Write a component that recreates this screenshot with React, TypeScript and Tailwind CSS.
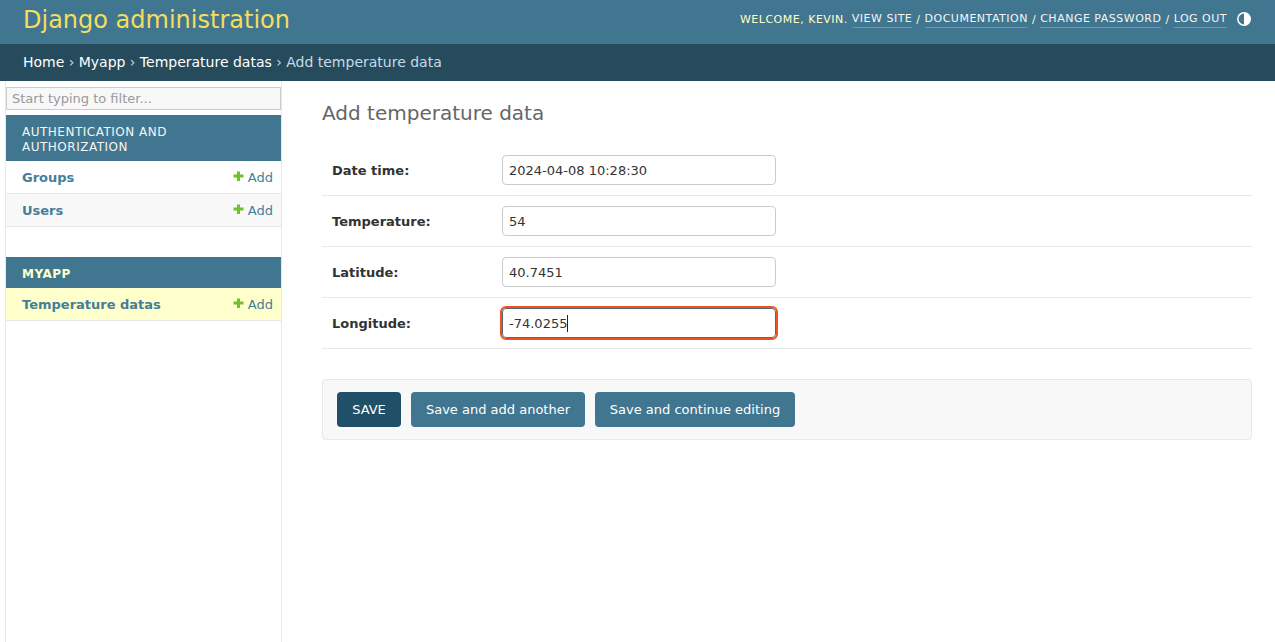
const SANS = "font-['DejaVu_Sans',sans-serif]";

const GROUPS = [
  { name: "AUTHENTICATION AND AUTHORIZATION", bold: false, rows: [{ label: "Groups" }, { label: "Users", alt: true }] },
  { name: "MYAPP", bold: true, rows: [{ label: "Temperature datas", selected: true }] },
];

const FIELDS = [
  { label: "Date time:", value: "2024-04-08 10:28:30" },
  { label: "Temperature:", value: "54" },
  { label: "Latitude:", value: "40.7451" },
  { label: "Longitude:", value: "-74.0255", focused: true },
];

function PlusIcon() {
  return (
    <svg width="11" height="11" viewBox="0 0 11 11" className="mr-[4px] mb-[3px]" aria-hidden="true">
      <path d="M4 0.5h3v3h3.5v3H7v3.5H4V6.5H0.5v-3H4z" fill="#70bf2b" />
    </svg>
  );
}

function ThemeIcon() {
  return (
    <svg width="16" height="16" viewBox="0 0 16 16" aria-hidden="true">
      <circle cx="8" cy="8" r="6.2" fill="none" stroke="#fff" strokeWidth="1.5" />
      <path d="M8 1.5a6.5 6.5 0 0 1 0 13z" fill="#fff" />
    </svg>
  );
}

function Header() {
  return (
    <header className="h-[44px] bg-[#417690] flex items-start justify-between pl-[23px] pr-[23px]">
      <h1 className="text-[24px] leading-[40px] font-normal text-[#f5dd5d]">Django administration</h1>
      <div className="flex items-center pt-[11px] text-[11px] leading-[16px] tracking-[0.5px] text-[#ffc]">
        <span className="mr-[4px]">WELCOME, KEVIN.</span>
        <a className="text-[#f5f5f5] border-b border-[#ffffff40]">VIEW SITE</a>
        <span className="mx-[4px]">/</span>
        <a className="text-[#f5f5f5] border-b border-[#ffffff40]">DOCUMENTATION</a>
        <span className="mx-[4px]">/</span>
        <a className="text-[#f5f5f5] border-b border-[#ffffff40]">CHANGE PASSWORD</a>
        <span className="mx-[4px]">/</span>
        <a className="text-[#f5f5f5] border-b border-[#ffffff40]">LOG OUT</a>
        <span className="ml-[9px] -mt-[2px]">
          <ThemeIcon />
        </span>
      </div>
    </header>
  );
}

function Breadcrumbs() {
  return (
    <nav className="h-[37px] bg-[#264b5d] pl-[23px] flex items-center text-[14px] text-[#c4dce8]">
      <a className="text-white">Home</a>
      <span className="mx-[4.4px]">›</span>
      <a className="text-white">Myapp</a>
      <span className="mx-[4.4px]">›</span>
      <a className="text-white">Temperature datas</a>
      <span className="mx-[4.4px]">›</span>
      <span>Add temperature data</span>
    </nav>
  );
}

function Sidebar() {
  return (
    <aside className="ml-[5px] w-[277px] shrink-0 border-x border-[#e8e8e8] flex flex-col">
      <input
        readOnly
        placeholder="Start typing to filter..."
        className="mt-[6px] h-[23px] w-full border border-[#ccc] bg-[#f8f8f8] px-[5px] text-[13px] text-[#333] placeholder:text-[#999] outline-none"
      />
      <div className="mt-[5px] flex flex-col gap-[30px]">
        {GROUPS.map((group) => (
          <section key={group.name}>
            <h2
              className={`bg-[#417690] px-[16px] pt-[10px] pb-[6px] text-[12px] leading-[15px] tracking-[0.5px] ${
                group.bold ? "font-bold text-[#ffc]" : "text-[#f5f5f5]"
              }`}
            >
              {group.name}
            </h2>
            {group.rows.map((row) => (
              <div
                key={row.label}
                className={`h-[33px] border-b border-[#e8e8e8] pl-[16px] pr-[8px] pt-[1px] flex items-center justify-between text-[13px] text-[#447e9b] ${
                  row.selected ? "bg-[#ffc]" : row.alt ? "bg-[#f8f8f8]" : "bg-white"
                }`}
              >
                <span className="font-bold">{row.label}</span>
                <span className="flex items-center">
                  <PlusIcon />
                  Add
                </span>
              </div>
            ))}
          </section>
        ))}
      </div>
    </aside>
  );
}

function Field({ label, value, focused }: { label: string; value: string; focused?: boolean }) {
  return (
    <div className="h-[51px] border-b border-[#e8e8e8] flex items-center pl-[10px]">
      <label className="w-[170px] shrink-0 pt-[2px] text-[13px] font-bold text-[#333]">{label}</label>
      <div className="relative">
        <input
          readOnly
          value={value}
          className={`block w-[274px] h-[30px] rounded-[4px] bg-white px-[6px] text-[13px] text-[#333] ${
            focused
              ? "border border-[#5b6770] outline-2 outline-[#e95420] outline-offset-0"
              : "border border-[#ccc] outline-none"
          }`}
        />
        {focused && <span className="absolute left-[65px] top-[7px] h-[17px] w-px bg-[#222]" />}
      </div>
    </div>
  );
}

export default function App() {
  return (
    <div className={`h-[642px] overflow-hidden bg-white ${SANS}`}>
      <Header />
      <Breadcrumbs />
      <div className="flex h-[561px]">
        <Sidebar />
        <main className="ml-[40px] w-[930px] shrink-0">
          <h1 className="mt-[20px] text-[20px] leading-[24px] font-normal text-[#666]">Add temperature data</h1>
          <div className="mt-[20px]">
            {FIELDS.map((field) => (
              <Field key={field.label} {...field} />
            ))}
          </div>
          <div className="mt-[30px] h-[61px] rounded-[4px] border border-[#e8e8e8] bg-[#f8f8f8] pl-[14px] flex items-center gap-[10px] text-[13px] text-white">
            <button className="h-[35px] w-[64px] rounded-[4px] bg-[#205067]">SAVE</button>
            <button className="h-[35px] w-[174px] rounded-[4px] bg-[#417690]">Save and add another</button>
            <button className="h-[35px] w-[200px] rounded-[4px] bg-[#417690]">Save and continue editing</button>
          </div>
        </main>
      </div>
    </div>
  );
}
